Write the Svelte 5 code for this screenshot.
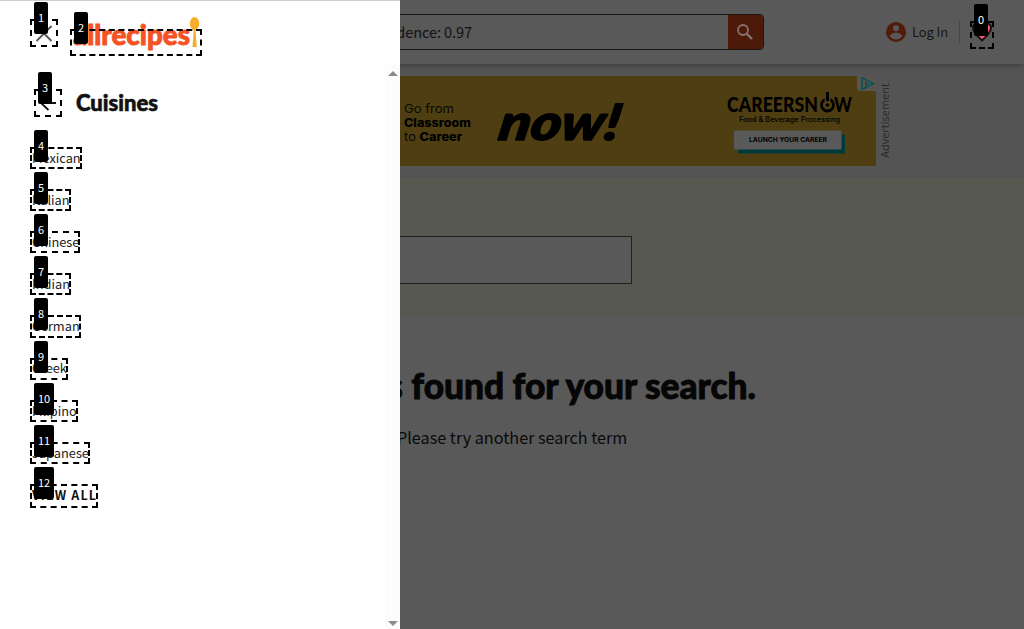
<script>
  const cuisines = ['Mexican', 'Italian', 'Chinese', 'Indian', 'German', 'Greek', 'Filipino', 'Japanese'];
  const marks = [
    [970, 21, 24, 28, 0],
    [30, 19, 28, 28, 1],
    [70, 29, 132, 27, 2],
    [34, 89, 28, 28, 3],
    [30, 147, 52, 22, 4],
    [30, 189, 41, 22, 5],
    [30, 231, 50, 22, 6],
    [30, 273, 41, 22, 7],
    [30, 315, 51, 23, 8],
    [30, 358, 38, 22, 9],
    [30, 400, 48, 22, 10],
    [30, 442, 60, 22, 11],
    [30, 484, 68, 24, 12]
  ];
</script>

<div class="page">
  <header>
    <div class="search">
      <div class="query">confidence: 0.97</div>
      <button aria-label="Search">
        <svg width="18" height="18" viewBox="0 0 18 18" fill="none" stroke="#837371" stroke-width="1.8">
          <circle cx="7" cy="7" r="5" /><path d="M10.5 10.5 16 16" stroke-width="2.4" />
        </svg>
      </button>
    </div>
    <div class="login">
      <svg width="20" height="20" viewBox="0 0 20 20">
        <circle cx="10" cy="10" r="10" fill="#4f1b0a" />
        <circle cx="10" cy="6.2" r="3" fill="#595959" />
        <path d="M4 14.2C4 11.8 8 10.8 10 10.8s6 1 6 3.4C14.500 16.500 12.500 17.400 10 17.400S5.500 16.500 4 14.200Z" fill="#595959" />
      </svg>
      <span>Log In</span>
    </div>
    <svg class="heart" width="20" height="20" viewBox="0 0 20 20">
      <path d="M10 18.500C5 14 1 10 1 6c0-3 2-4.500 4.500-4.500C8 1.500 10 4 10 4s2-2.500 4.500-2.500C17.500 1.500 19 3.500 19 6c0 4-4 8-9 12.500Z" fill="#ff5577" stroke="#161314" stroke-width="2" />
    </svg>
  </header>

  <div class="adrow">
    <svg class="ad" width="728" height="90" viewBox="148 76 728 90">
      <rect x="148" y="76" width="728" height="90" fill="#4e3e11" />
      <g font-family="Inter, sans-serif" font-size="11.500" fill="#090805">
        <text x="404" y="112.500" textLength="50" lengthAdjust="spacingAndGlyphs">Go from</text>
        <text x="404" y="126.700" textLength="67" lengthAdjust="spacingAndGlyphs" font-weight="800" fill="#000">Classroom</text>
        <text x="404" y="141" textLength="12" lengthAdjust="spacingAndGlyphs">to</text>
        <text x="419.500" y="141" textLength="42.500" lengthAdjust="spacingAndGlyphs" font-weight="800" fill="#000">Career</text>
      </g>
      <text transform="translate(497 140) skewX(-10)" font-family="Lato, sans-serif" font-weight="900" font-style="italic" font-size="50" stroke="#000" stroke-width="1.500" stroke-linejoin="round" textLength="121" lengthAdjust="spacingAndGlyphs">now!</text>
      <g font-family="Lato, sans-serif" font-weight="900" font-size="20">
        <text x="727" y="112" textLength="91" lengthAdjust="spacingAndGlyphs">CAREERSN</text>
        <text x="834" y="112" textLength="18" lengthAdjust="spacingAndGlyphs">W</text>
      </g>
      <circle cx="827.500" cy="105" r="6" fill="none" stroke="#000" stroke-width="2.800" />
      <circle cx="827.500" cy="105" r="1.800" />
      <path d="M827.500 92v9" stroke="#4e3e11" stroke-width="6" />
      <path d="M827.500 92v9" stroke="#000" stroke-width="3" />
      <text x="739" y="121.500" font-family="Inter, sans-serif" font-weight="500" font-size="7.300" textLength="101" lengthAdjust="spacingAndGlyphs">Food &amp; Beverage Processing</text>
      <rect x="738" y="134.500" width="107" height="19" fill="#00393a" />
      <rect x="734" y="130.500" width="107.500" height="19" fill="#595959" />
      <text x="749" y="142.200" font-family="Inter, sans-serif" font-weight="700" font-size="6.500" textLength="78" lengthAdjust="spacingAndGlyphs">LAUNCH YOUR CAREER</text>
      <path d="M857 76h19v15h-15q-4 0-4-4Z" fill="#57554e" />
      <path d="M862 77.700v11.800l11.500-5.900Z" fill="none" stroke="#07505c" stroke-width="1.500" stroke-linejoin="round" />
      <path d="M865.500 81v6M865.500 82.500l3 1.200-3 1.500" fill="none" stroke="#07505c" />
    </svg>
    <div class="adlabel">Advertisement</div>
  </div>

  <div class="filter"><div class="field"></div></div>

  <main>
    <svg width="632" height="48" viewBox="132 364 632 48">
      <text x="756" y="399" text-anchor="end" font-family="Lato, sans-serif" font-weight="900" font-size="36.500" fill="#060606" stroke="#060606" stroke-width=".9" textLength="514" lengthAdjust="spacingAndGlyphs">No results found for your search.</text>
    </svg>
    <p>Please try another search term</p>
  </main>
</div>

<aside>
  <div class="top">
    <svg width="24" height="24" viewBox="0 0 24 24" fill="none" stroke="#555" stroke-width="1.800"><path d="m4.500 5 15 15M19.500 5l-15 15" /></svg>
    <svg class="logo" width="132" height="42" viewBox="70 12 132 42">
      <text x="73" y="44.500" font-family="Lato, sans-serif" font-weight="900" font-size="28.500" fill="#f55225" stroke="#f55225" stroke-width=".9" textLength="117" lengthAdjust="spacingAndGlyphs">allrecipes</text>
      <ellipse cx="194.500" cy="23.500" rx="4.700" ry="6.500" fill="#f9ae2b" />
      <path d="M193.700 29h1.800l1.200 18h-4.200Z" fill="#f9ae2b" />
    </svg>
  </div>
  <div class="body">
    <div class="menu">
      <div class="title">
        <svg width="24" height="24" viewBox="0 0 24 24" fill="none" stroke="#111" stroke-width="1.800"><path d="M12.500 5 5 12l7.500 7M5 12h15" /></svg>
        <svg width="84" height="34" viewBox="76 86 84 34">
          <text x="76" y="110.500" font-family="Lato, sans-serif" font-weight="900" font-size="22" fill="#111" stroke="#111" stroke-width=".6" textLength="82" lengthAdjust="spacingAndGlyphs">Cuisines</text>
        </svg>
      </div>
      <nav>
        {#each cuisines as name}<a href="#top">{name}</a>{/each}
        <a class="all" href="#top">VIEW ALL</a>
      </nav>
    </div>
    <div class="bar">
      <svg width="10" height="5" viewBox="0 0 10 5"><path d="M5 0l5 5H0Z" fill="#8b8b8b" /></svg>
      <svg width="10" height="5" viewBox="0 0 10 5"><path d="M0 0h10L5 5Z" fill="#8b8b8b" /></svg>
    </div>
  </div>
</aside>

{#each marks as [x, y, w, h, n]}
  <div class="mark" style="left:{x}px;top:{y}px;width:{w}px;height:{h}px"><span>{n}</span></div>
{/each}

<style>
  :global(body) { margin: 0; overflow: hidden; background: #595959; }
  * { box-sizing: border-box; }
  svg { display: block; flex: none; }
  .page, aside { font-family: "Noto Sans CJK JP", "Noto Sans CJK SC", sans-serif; }
  .page { height: 629px; width: 1024px; overflow: hidden; background: #595959; }
  header { position: relative; height: 64px; display: flex; align-items: center; padding: 0 30px 0 220px; box-shadow: 0 2px 5px rgba(0, 0, 0, .22); }
  .search { width: 544px; height: 36px; border: 1px solid #181818; border-radius: 4px; display: flex; overflow: hidden; }
  .query { flex: 1; text-align: right; padding-right: 256px; font-size: 14.600px; line-height: 34px; color: #121212; white-space: nowrap; letter-spacing: -.1px; }
  button { width: 35px; border: 0; padding: 0 0 0 8px; background: #4d1a09; }
  .login { display: flex; align-items: center; gap: 6px; margin-left: 122px; width: 74px; height: 24px; border-right: 1px solid #484848; font-size: 13px; letter-spacing: -.1px; line-height: 20px; color: #161616; white-space: nowrap; }
  .heart { margin-left: 12px; }
  .adrow { height: 114px; background: #545454; display: flex; padding: 12px 0 0 148px; }
  .adlabel { writing-mode: vertical-rl; transform: rotate(180deg); font: 11px/18px "Open Sans", sans-serif; height: 90px; text-align: center; color: #292929; }
  .filter { height: 138px; background: #575850; padding: 58px 0 0 132px; }
  .field { width: 500px; height: 48px; background: #595959; border: 1px solid #1f1f1f; }
  main { padding: 48px 0 0 132px; }
  p { margin: 11px 0 0 265px; font-size: 16.200px; line-height: 28px; color: #090909; }
  aside { position: absolute; left: 0; top: 0; width: 400px; height: 629px; background: #fff; border-top: 1px solid #ccc; display: flex; flex-direction: column; }
  .top { height: 64px; display: flex; padding: 11px 0 0 32px; gap: 14px; }
  .top > svg:first-child { margin-top: 9px; }
  .body { flex: 1; display: flex; }
  .menu { flex: 1; padding: 21px 0 0 32px; }
  .title { display: flex; align-items: center; gap: 16px; padding-left: 4px; height: 34px; }
  nav { display: flex; flex-direction: column; padding-top: 27.700px; }
  a { height: 42.170px; line-height: 20px; font-size: 12.800px; color: #222; text-decoration: none; }
  .all { font-weight: 700; font-size: 12.500px; letter-spacing: 1.100px; color: #111; }
  .bar { width: 15px; background: #fcfcfc; display: flex; flex-direction: column; align-items: center; justify-content: space-between; padding: 6px 0 3px; margin-right: 0; }
  .mark { position: absolute; border: 2px dashed #000; }
  .mark span { position: absolute; left: 2px; top: -19px; height: 32px; padding: 0 4px; min-width: 14px; text-align: center; background: #000; color: #fff; border-radius: 2px; font: 11px/31px "Noto Sans CJK JP", sans-serif; }
</style>
